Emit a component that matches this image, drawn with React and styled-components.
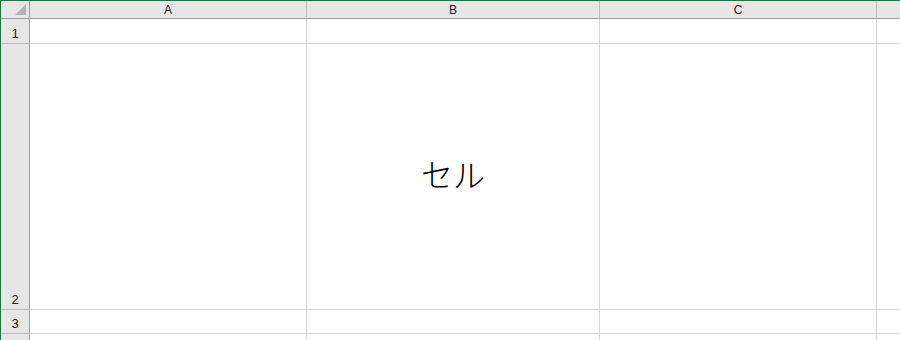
import React from "react";
import styled, { createGlobalStyle } from "styled-components";

const GlobalStyle = createGlobalStyle`
  html, body {
    margin: 0;
    padding: 0;
    background: #ffffff;
    overflow: hidden;
  }
`;

const columns = ["A", "B", "C"];
const rows = [
  { id: 1, height: 25 },
  { id: 2, height: 266, value: "セル" },
  { id: 3, height: 24 },
];

const Sheet = styled.div`
  display: grid;
  grid-template-columns: 29px 277px 293px 277px 1fr;
  grid-template-rows: 18px ${rows.map((r) => `${r.height}px`).join(" ")} 1fr;
  width: 900px;
  height: 340px;
  box-sizing: border-box;
  border-top: 1px solid #217346;
  border-left: 1px solid #217346;
  font-family: "Liberation Sans", "Noto Sans CJK JP", sans-serif;
`;

const Corner = styled.div`
  position: relative;
  background: #e6e6e6;
  box-sizing: border-box;
  border-right: 1px solid #9e9e9e;
  border-bottom: 1px solid #9e9e9e;
`;

const Triangle = styled.div`
  position: absolute;
  right: 3px;
  bottom: 3px;
  width: 0;
  height: 0;
  border-left: 11px solid transparent;
  border-bottom: 11px solid #b4b4b4;
`;

const ColHead = styled.div`
  display: flex;
  align-items: center;
  justify-content: center;
  background: #e6e6e6;
  box-sizing: border-box;
  border-right: 1px solid ${(p) => (p.$last ? "#e6e6e6" : "#bcbcbc")};
  border-bottom: 1px solid #9e9e9e;
  font-size: 12px;
  color: #222;
  padding-top: 1px;
`;

const RowHead = styled.div`
  display: flex;
  align-items: flex-end;
  justify-content: center;
  background: #e6e6e6;
  box-sizing: border-box;
  border-right: 1px solid #9e9e9e;
  border-bottom: 1px solid #bcbcbc;
  font-size: 13px;
  color: #222;
  padding-bottom: 2px;
`;

const Cell = styled.div`
  display: flex;
  align-items: center;
  justify-content: center;
  box-sizing: border-box;
  border-right: 1px solid ${(p) => (p.$last ? "transparent" : "#d4d4d4")};
  border-bottom: 1px solid ${(p) => (p.$bottom ? "transparent" : "#d4d4d4")};
  background: #fff;
  font-family: "Noto Sans CJK JP", "Liberation Sans", sans-serif;
  font-size: 32px;
  font-weight: 300;
  color: #000;
  padding-bottom: 8px;
`;

export default function App() {
  return (
    <>
      <GlobalStyle />
      <Sheet>
        <Corner>
          <Triangle />
        </Corner>
        {columns.map((c) => (
          <ColHead key={c}>{c}</ColHead>
        ))}
        <ColHead $last />
        {rows.map((r) => (
          <React.Fragment key={r.id}>
            <RowHead>{r.id}</RowHead>
            {columns.map((c) => (
              <Cell key={c}>{c === "B" ? r.value : null}</Cell>
            ))}
            <Cell $last />
          </React.Fragment>
        ))}
        <RowHead />
        {columns.map((c) => (
          <Cell key={c} $bottom />
        ))}
        <Cell $last $bottom />
      </Sheet>
    </>
  );
}
